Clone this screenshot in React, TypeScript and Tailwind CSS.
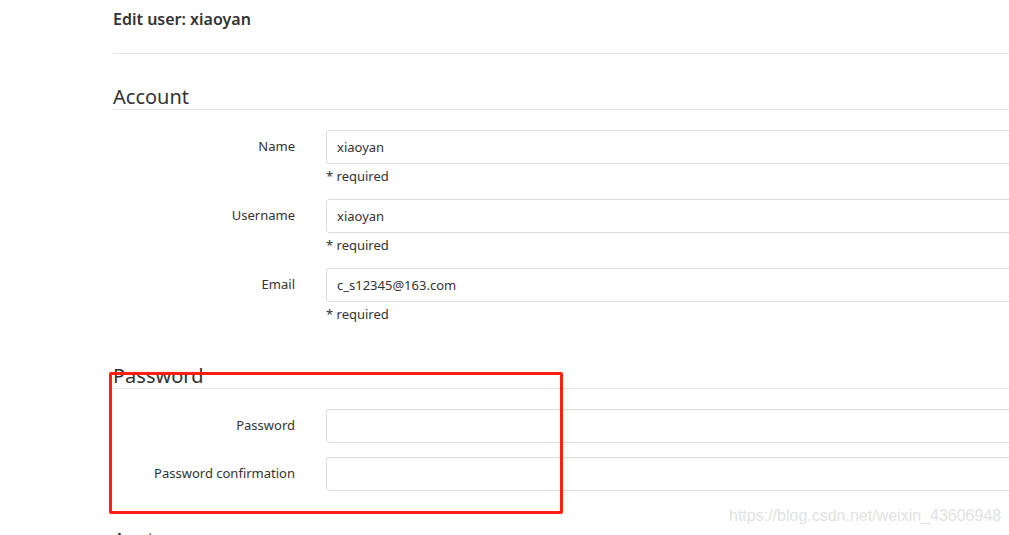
import React from "react";

type Field = { label: string; value?: string; required?: boolean };

const account: Field[] = [
  { label: "Name", value: "xiaoyan", required: true },
  { label: "Username", value: "xiaoyan", required: true },
  { label: "Email", value: "c_s12345@163.com", required: true },
];

const password: Field[] = [
  { label: "Password" },
  { label: "Password confirmation" },
];

function Row({ field, last }: { field: Field; last?: boolean }) {
  return (
    <div className={`flex items-start gap-[31px] ${field.required ? "mb-[13px]" : last ? "" : "mb-[14px]"}`}>
      <label className="w-[182px] shrink-0 pt-[6px] text-right text-[13px] leading-[20px] text-[#333]">
        {field.label}
      </label>
      <div className="flex-1">
        <input
          readOnly
          type={field.value ? "text" : "password"}
          value={field.value ?? ""}
          className="block h-[34px] w-full rounded-[3px] border border-[#ddd] bg-white px-[10px] text-[13px] text-[#333] outline-none"
        />
        {field.required && (
          <p className="mt-[2px] text-[13px] leading-[20px] text-[#333]">* required</p>
        )}
      </div>
    </div>
  );
}

function Section({ title, fields }: { title: string; fields: Field[] }) {
  return (
    <section>
      <h2 className="h-[26px] border-b border-[#e5e5e5] text-[20px] leading-[26px] font-normal text-[#333]">
        {title}
      </h2>
      <div className="pt-[20px]">
        {fields.map((f, i) => (
          <Row key={f.label} field={f} last={i === fields.length - 1} />
        ))}
      </div>
    </section>
  );
}

export default function App() {
  return (
    <div
      className="relative h-[535px] w-[1009px] overflow-hidden bg-white"
      style={{ fontFamily: '"Noto Sans", "Open Sans", sans-serif' }}
    >
      <div className="ml-[113px] w-[1000px] pt-[9px]">
        <h1 className="text-[16px] leading-[20px] font-semibold text-[#333]">Edit user: xiaoyan</h1>
        <hr className="mt-[24px] border-[#e5e5e5]" />

        <div className="mt-[30px]">
          <Section title="Account" fields={account} />
        </div>
        <div className="mt-[39px]">
          <Section title="Password" fields={password} />
        </div>
        <div className="mt-[36px]">
          <h2 className="text-[20px] leading-[26px] text-[#333]">Avatar</h2>
        </div>
      </div>

      {/* annotation box over the password fields */}
      <div className="absolute left-[109px] top-[372px] h-[142px] w-[454px] rounded-[2px] border-[3px] border-[#ff1e12]" />

      <span
        className="absolute left-[729px] top-[506px] text-[16px] leading-[20px] text-[#e2e2e2]"
        style={{ fontFamily: '"Liberation Sans", Arial, sans-serif' }}
      >
        https://blog.csdn.net/weixin_43606948
      </span>
    </div>
  );
}
